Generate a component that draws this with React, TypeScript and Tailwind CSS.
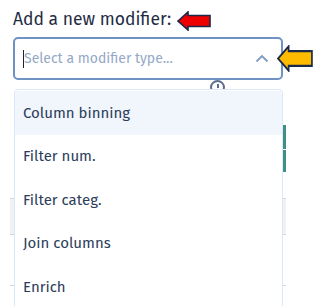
import React from "react";

const items = ["Column binning", "Filter num.", "Filter categ.", "Join columns", "Enrich"];

function LeftArrow({ fill, className }: { fill: string; className?: string }) {
  return (
    <svg className={className} viewBox="0 0 34 20" width="34" height="20" preserveAspectRatio="none">
      <polygon
        points="1,10 11,1 11,4.5 33,4.5 33,15.5 11,15.5 11,19"
        fill={fill}
        stroke="#1b2a4a"
        strokeWidth="1.6"
        strokeLinejoin="miter"
      />
    </svg>
  );
}

export default function App() {
  return (
    <div
      className="relative w-[313px] h-[306px] overflow-hidden bg-white"
      style={{ fontFamily: '"Fira Sans", "Noto Sans", "Open Sans", sans-serif' }}
    >
      {/* page content partly hidden behind the open menu */}
      <div className="absolute inset-0 pl-[10px] pt-[80px] flex flex-col">
        <div className="pl-[200px]">
          <div className="w-[15px] h-[15px] rounded-full border-2 border-[#5a6f8e] flex justify-center pt-[2px]">
            <div className="w-[2px] h-[4px] bg-[#5a6f8e]" />
          </div>
        </div>
        <div className="mt-[30px] w-[276px] flex justify-between">
          <div />
          <div className="flex flex-col gap-[1px]">
            <div className="w-[3px] h-[24px] bg-[#3f8f84]" />
            <div className="w-[3px] h-[22px] bg-[#3f8f84]" />
          </div>
        </div>
        <div className="mt-[26px] w-[276px] h-[37px] bg-[#f1f1f1] border-y border-[#d6d6d6]" />
        <div className="mt-[50px] w-[276px] h-[1px] bg-[#d6d6d6]" />
      </div>

      <div className="relative pl-[13px] pt-[8px]">
        <div className="flex items-center h-[24px] gap-[6px]">
          <span className="text-[17.5px] leading-[24px] text-[#1f2d45]">Add a new modifier:</span>
          <LeftArrow fill="#ee0000" className="w-[34px] h-[20px] mt-[2px]" />
        </div>
        <div className="mt-[5px] flex items-center">
          <div className="w-[270px] h-[43px] rounded-[5px] border-2 border-[#6f92c2] bg-white flex items-center pl-[8px] pr-[12px]">
            <span className="w-[1px] h-[18px] bg-[#222]" />
            <span className="flex-1 text-[14px] text-[#94a8c6]">Select a modifier type...</span>
            <svg width="14" height="9" viewBox="0 0 14 9">
              <polyline points="1.5,7.5 7,2 12.5,7.5" fill="none" stroke="#7f9bc2" strokeWidth="1.8" />
            </svg>
          </div>
          <LeftArrow fill="#ffbb00" className="-ml-[6px] w-[36px] h-[27px] shrink-0" />
        </div>
        <div className="absolute left-[14px] top-[89px] w-[269px] h-[230px] bg-white border border-[#dbe7fa] rounded-[4px] flex flex-col pt-[1px]">
          {items.map((it, i) => (
            <div
              key={it}
              className={
                "h-[43.5px] flex items-center pl-[8px] text-[15px] text-[#2b3d5b] " +
                (i === 0 ? "bg-[#f1f6fc]" : "")
              }
            >
              {it}
            </div>
          ))}
        </div>
      </div>
    </div>
  );
}
